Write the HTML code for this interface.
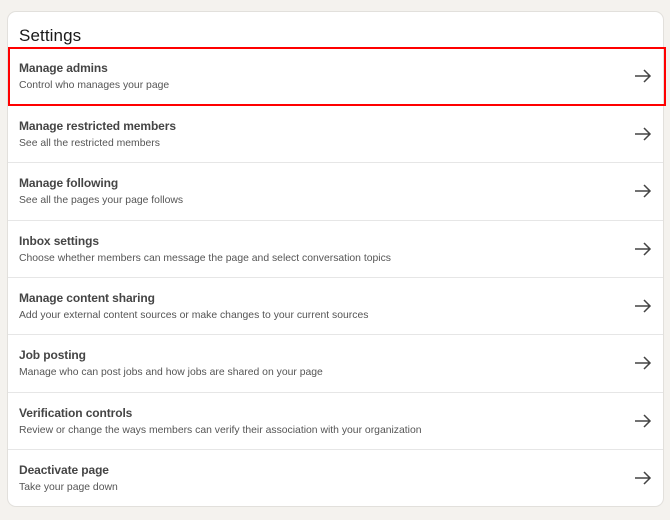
<!DOCTYPE html>
<html><head><style>
body{margin:0;width:670px;height:520px;background:#f4f2ee;font-family:"Liberation Sans",sans-serif;position:relative;overflow:hidden}
.card{position:absolute;left:8px;top:12px;width:655px;height:494px;background:#fff;border-radius:8px;box-shadow:0 0 0 1px #e2e0dc}
h1{position:absolute;left:11px;top:14px;margin:0;font-size:17px;font-weight:normal;color:#191919;letter-spacing:0.1px}
.row{position:absolute;left:0;width:655px;height:57px;border-top:1px solid #e6e6e6;box-sizing:border-box}
.t{position:absolute;left:11px;top:13px;font-size:12px;color:#454545;font-weight:bold;letter-spacing:-0.1px}
.s{position:absolute;left:11px;top:32px;font-size:10.4px;color:#555}
svg{position:absolute;left:626px;top:20px}
.hl{position:absolute;left:8px;top:47px;width:658px;height:59px;border:2px solid #f00;box-sizing:border-box}
</style></head><body>
<div class="card">
<h1>Settings</h1>
<div class="row" style="top:36px;border-top:none"><div class="t">Manage admins</div><div class="s">Control who manages your page</div><svg width="18" height="16" viewBox="0 0 18 16"><path d="M1 8H16M10 2L16 8L10 14" fill="none" stroke="#444" stroke-width="1.5"/></svg></div>
<div class="row" style="top:93px"><div class="t">Manage restricted members</div><div class="s">See all the restricted members</div><svg width="18" height="16" viewBox="0 0 18 16"><path d="M1 8H16M10 2L16 8L10 14" fill="none" stroke="#444" stroke-width="1.5"/></svg></div>
<div class="row" style="top:150px"><div class="t">Manage following</div><div class="s">See all the pages your page follows</div><svg width="18" height="16" viewBox="0 0 18 16"><path d="M1 8H16M10 2L16 8L10 14" fill="none" stroke="#444" stroke-width="1.5"/></svg></div>
<div class="row" style="top:208px"><div class="t">Inbox settings</div><div class="s">Choose whether members can message the page and select conversation topics</div><svg width="18" height="16" viewBox="0 0 18 16"><path d="M1 8H16M10 2L16 8L10 14" fill="none" stroke="#444" stroke-width="1.5"/></svg></div>
<div class="row" style="top:265px"><div class="t">Manage content sharing</div><div class="s">Add your external content sources or make changes to your current sources</div><svg width="18" height="16" viewBox="0 0 18 16"><path d="M1 8H16M10 2L16 8L10 14" fill="none" stroke="#444" stroke-width="1.5"/></svg></div>
<div class="row" style="top:322px"><div class="t">Job posting</div><div class="s">Manage who can post jobs and how jobs are shared on your page</div><svg width="18" height="16" viewBox="0 0 18 16"><path d="M1 8H16M10 2L16 8L10 14" fill="none" stroke="#444" stroke-width="1.5"/></svg></div>
<div class="row" style="top:380px"><div class="t">Verification controls</div><div class="s">Review or change the ways members can verify their association with your organization</div><svg width="18" height="16" viewBox="0 0 18 16"><path d="M1 8H16M10 2L16 8L10 14" fill="none" stroke="#444" stroke-width="1.5"/></svg></div>
<div class="row" style="top:437px"><div class="t">Deactivate page</div><div class="s">Take your page down</div><svg width="18" height="16" viewBox="0 0 18 16"><path d="M1 8H16M10 2L16 8L10 14" fill="none" stroke="#444" stroke-width="1.5"/></svg></div>
</div>
<div class="hl"></div>
</body></html>
